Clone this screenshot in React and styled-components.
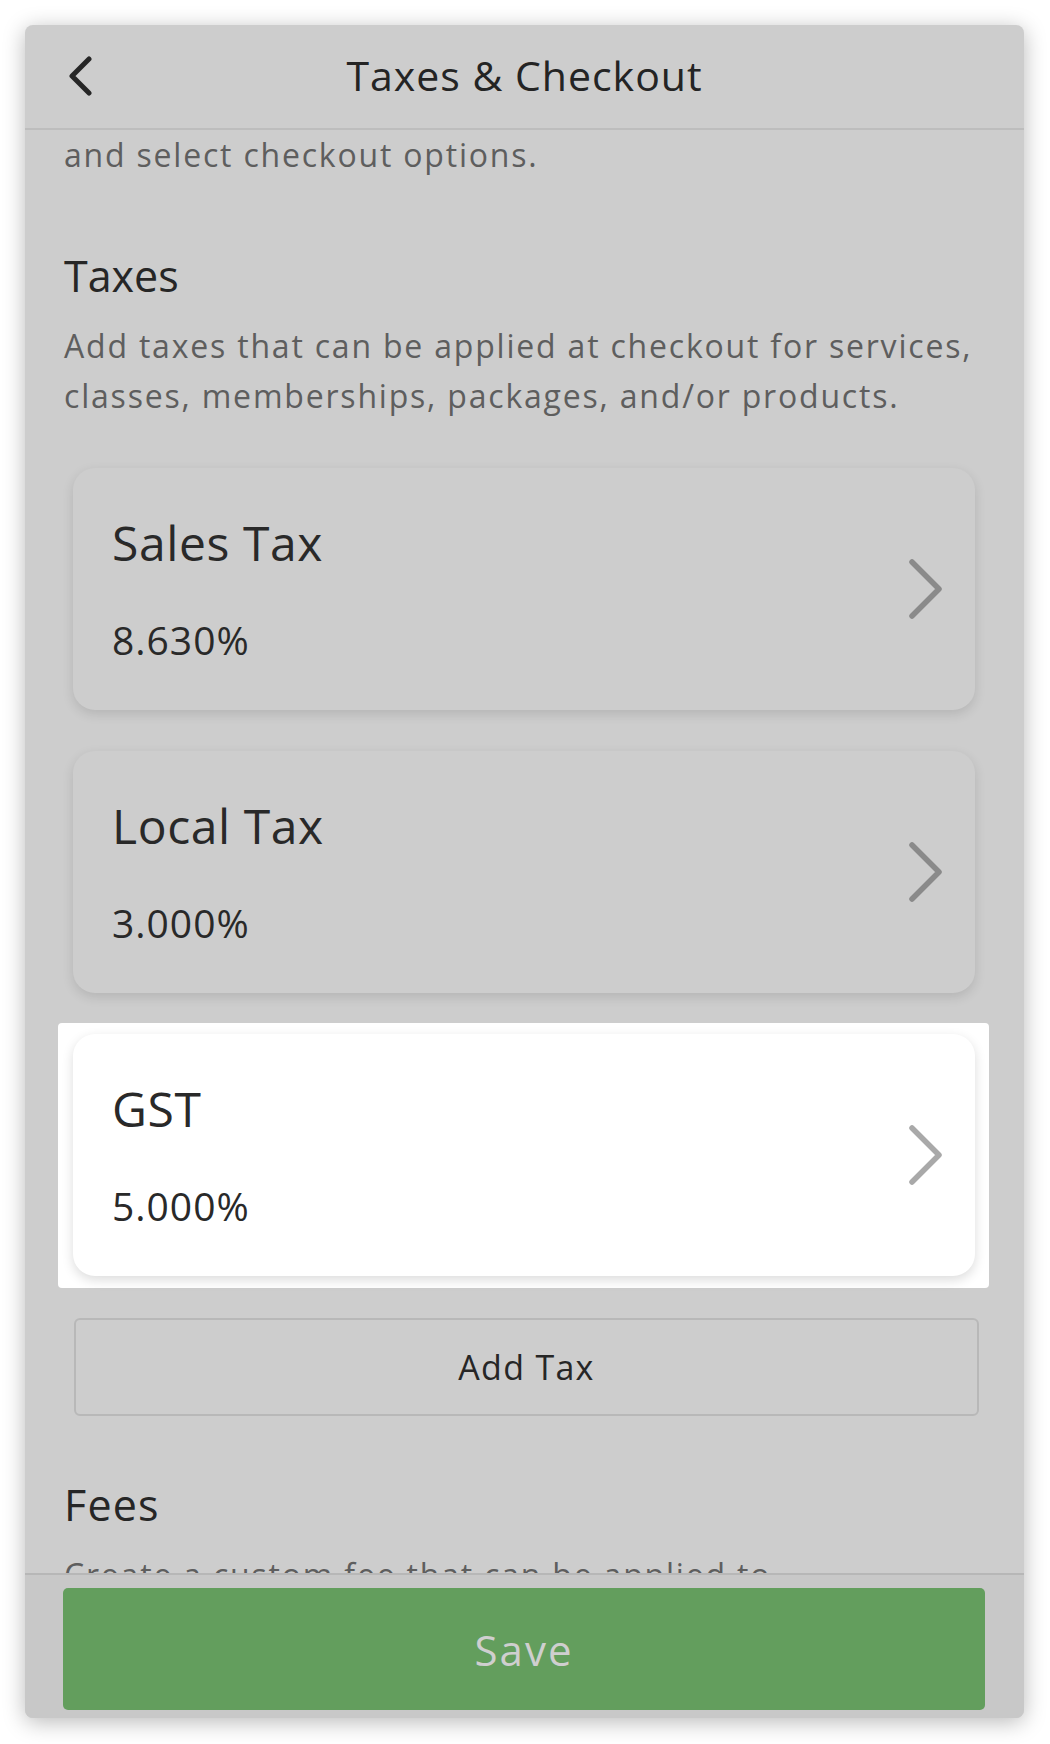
import React from 'react';
import styled, { createGlobalStyle } from 'styled-components';

const GlobalStyle = createGlobalStyle`
  html, body {
    margin: 0;
    padding: 0;
    background: #ffffff;
  }
  body {
    font-family: "Open Sans", "Liberation Sans", sans-serif;
    color: #2a2a2a;
  }
`;

const taxes = [
  { name: 'Sales Tax', rate: '8.630%' },
  { name: 'Local Tax', rate: '3.000%' },
  { name: 'GST', rate: '5.000%', active: true },
];

const Chevron = ({ color }) => (
  <svg width="36" height="62" viewBox="0 0 36 62" fill="none">
    <polyline
      points="4,4 31,31 4,58"
      stroke={color}
      strokeWidth="5.5"
      strokeLinecap="round"
      strokeLinejoin="round"
    />
  </svg>
);

const BackIcon = () => (
  <svg width="26" height="40" viewBox="0 0 26 40" fill="none">
    <polyline
      points="21,3 4,20 21,37"
      stroke="#262626"
      strokeWidth="5"
      strokeLinecap="round"
      strokeLinejoin="round"
    />
  </svg>
);

const App = () => {
  return (
    <Page>
      <GlobalStyle />
      <Frame>
        <Header>
          <BackButton>
            <BackIcon />
          </BackButton>
          <Title>Taxes &amp; Checkout</Title>
        </Header>
        <Content>
          <Text>and select checkout options.</Text>
          <Heading>Taxes</Heading>
          <Text $gap>
            Add taxes that can be applied at checkout for services,
            <br />
            classes, memberships, packages, and/or products.
          </Text>
          <TaxList>
            {taxes.map((tax) => (
              <Spot key={tax.name} $active={tax.active}>
                <TaxCard $active={tax.active}>
                  <div>
                    <TaxName>{tax.name}</TaxName>
                    <TaxRate>{tax.rate}</TaxRate>
                  </div>
                  <Chevron color={tax.active ? '#a9a9a9' : '#8a8a8a'} />
                </TaxCard>
              </Spot>
            ))}
            <AddButton>Add Tax</AddButton>
          </TaxList>
          <Heading $fees>Fees</Heading>
          <Text $gap>Create a custom fee that can be applied to</Text>
        </Content>
        <Footer>
          <SaveButton>Save</SaveButton>
        </Footer>
      </Frame>
    </Page>
  );
};

const Page = styled.div`
  padding: 25px 26px 26px 25px;
`;

const Frame = styled.div`
  width: 999px;
  height: 1693px;
  background: #cdcdcd;
  border-radius: 8px;
  box-shadow: 0 4px 22px rgba(0, 0, 0, 0.28);
  display: flex;
  flex-direction: column;
  overflow: hidden;
`;

const Header = styled.div`
  height: 105px;
  box-sizing: border-box;
  border-bottom: 2px solid #bdbdbd;
  display: flex;
  align-items: center;
  justify-content: center;
  position: relative;
  flex-shrink: 0;
`;

const BackButton = styled.div`
  position: absolute;
  left: 43px;
  top: 31px;
  display: flex;
`;

const Title = styled.h1`
  margin: 0 0 3px;
  font-size: 41px;
  font-weight: 400;
  color: #242424;
  letter-spacing: 1px;
`;

const Content = styled.div`
  flex: 1;
  overflow: hidden;
  padding: 0 39px;
  display: flex;
  flex-direction: column;
`;

const Text = styled.p`
  margin: ${(p) => (p.$gap ? '15px' : '0')} 0 0;
  font-size: 32px;
  line-height: 50px;
  color: #5e5e5e;
  letter-spacing: 1.8px;
  white-space: nowrap;
  flex-shrink: 0;
`;

const Heading = styled.h2`
  margin: ${(p) => (p.$fees ? '59px' : '66px')} 0 0;
  font-size: 43px;
  line-height: 60px;
  font-weight: 400;
  color: #262626;
  letter-spacing: ${(p) => (p.$fees ? '1.2px' : '0')};
  flex-shrink: 0;
`;

const TaxList = styled.div`
  margin: 36px -4px 0 -6px;
  display: flex;
  flex-direction: column;
  gap: 18px;
  flex-shrink: 0;
`;

const Spot = styled.div`
  padding: 11px 14px 12px 15px;
  border-radius: 4px;
  background: ${(p) => (p.$active ? '#ffffff' : 'transparent')};
`;

const TaxCard = styled.div`
  height: 242px;
  box-sizing: border-box;
  padding: 45px 31px 45px 39px;
  border-radius: 22px;
  background: ${(p) => (p.$active ? '#ffffff' : '#cdcdcd')};
  box-shadow: ${(p) =>
    p.$active
      ? '0 4px 12px rgba(0, 0, 0, 0.14)'
      : '0 4px 12px rgba(0, 0, 0, 0.12)'};
  display: flex;
  align-items: center;
  justify-content: space-between;
`;

const TaxName = styled.div`
  font-size: 48px;
  line-height: 60px;
  color: #292929;
  letter-spacing: 0.6px;
`;

const TaxRate = styled.div`
  margin-top: 42px;
  font-size: 39px;
  line-height: 50px;
  color: #292929;
  letter-spacing: 1px;
`;

const AddButton = styled.div`
  margin: 12px 10px 0 16px;
  height: 98px;
  box-sizing: border-box;
  border: 2px solid #b8b8b8;
  border-radius: 6px;
  display: flex;
  align-items: center;
  justify-content: center;
  font-size: 34px;
  color: #262626;
  letter-spacing: 1.3px;
`;

const Footer = styled.div`
  flex-shrink: 0;
  height: 145px;
  box-sizing: border-box;
  border-top: 2px solid #b7b7b7;
  background: #c8c8c8;
  padding: 13px 39px 8px 38px;
  display: flex;
`;

const SaveButton = styled.div`
  flex: 1;
  border-radius: 5px;
  background: #639e5d;
  color: #cfcfcf;
  font-size: 42px;
  letter-spacing: 2px;
  display: flex;
  align-items: center;
  justify-content: center;
`;

export default App;
